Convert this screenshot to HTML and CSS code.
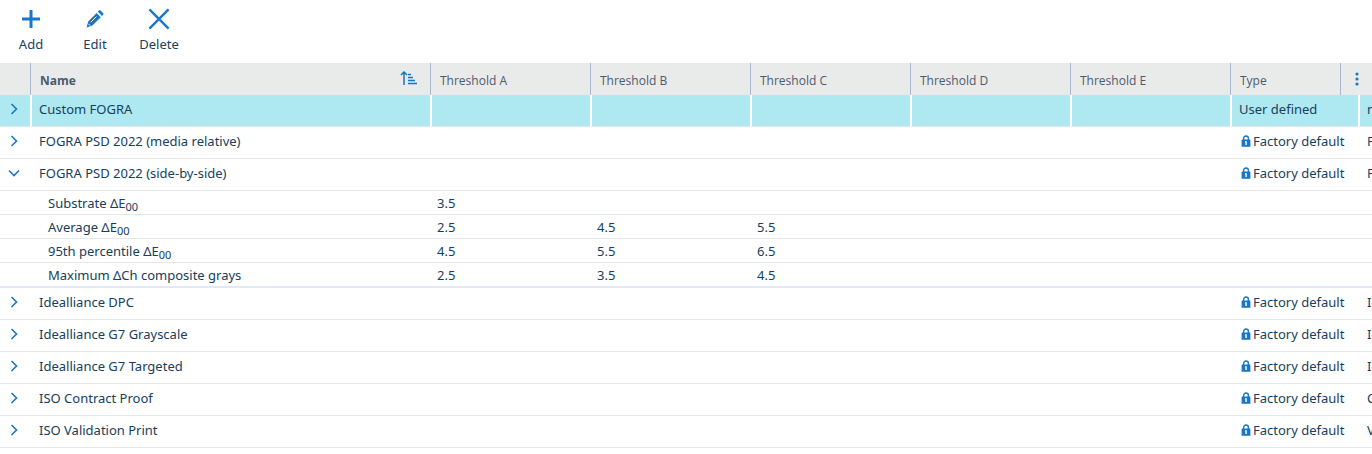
FILE: index.html
```html
<!DOCTYPE html>
<html lang="en">

<head>
    <meta charset="UTF-8">
    <meta name="viewport" content="width=device-width, initial-scale=1.0">
    <title>Verification Presets</title>
    <link rel="stylesheet" href="styles.css">
</head>

<body>
    <!-- icons used more than once -->
    <svg class="sprite" aria-hidden="true">
        <symbol id="chevron" viewBox="0 0 14 14">
            <path d="M4.5 2 L9.5 7 L4.5 12" fill="none" stroke="#1976c8" stroke-width="1.6" />
        </symbol>
        <symbol id="lock" viewBox="0 0 10 12">
            <path d="M2.6 6 V3.4 A2.4 2.4 0 0 1 7.4 3.4 V6" fill="none" stroke="#1976c8" stroke-width="1.4" />
            <rect x="0.6" y="4.4" width="8.8" height="7.4" rx="0.5" fill="#1976c8" />
            <path d="M4 6.2 H5.8 V10 H4.4 V7.4 H4 Z" fill="#fff" />
        </symbol>
    </svg>

    <div class="toolbar">
        <button type="button" class="tool">
            <svg width="22" height="22" viewBox="0 0 22 22"><path d="M11 2 V20 M2 11 H20" fill="none" stroke="#1976c8" stroke-width="3" /></svg>
            <span>Add</span>
        </button>
        <button type="button" class="tool">
            <svg width="22" height="22" viewBox="0 0 22 22">
                <path d="M2.6 19.4 L4.2 13.4 L12.6 5 L16.8 9.2 L8.4 17.6 Z M13.8 3.8 L15 2.6 Q15.8 2 16.6 2.6 L19.2 5.2 Q19.8 6 19.2 6.8 L18 8 Z" fill="#1976c8" />
                <path d="M6.8 14.2 L12.4 8.6 M4.4 15.8 L6.2 17.6" stroke="#fff" stroke-width="1" />
            </svg>
            <span>Edit</span>
        </button>
        <button type="button" class="tool">
            <svg width="22" height="22" viewBox="0 0 22 22"><path d="M1.4 1.4 L20.6 20.6 M20.6 1.4 L1.4 20.6" fill="none" stroke="#1976c8" stroke-width="2.4" /></svg>
            <span>Delete</span>
        </button>
    </div>

    <div class="grid">
        <table>
            <colgroup>
                <col class="col-toggle">
                <col class="col-name">
                <col class="col-value" span="5">
                <col class="col-type">
                <col>
            </colgroup>
            <thead>
                <tr>
                    <th></th>
                    <th class="sorted">
                        <div class="head">Name
                            <svg width="18" height="16" viewBox="0 0 18 16"><path d="M4 14 V1 M1 4 L4 1 L7 4 M8 3.5 H11 M8 6.5 H13 M8 9.5 H15 M8 12.5 H17" fill="none" stroke="#1976c8" stroke-width="1.5" /></svg>
                        </div>
                    </th>
                    <th>Threshold A</th>
                    <th>Threshold B</th>
                    <th>Threshold C</th>
                    <th>Threshold D</th>
                    <th>Threshold E</th>
                    <th>Type</th>
                    <th></th>
                </tr>
            </thead>
            <tbody>
                <tr class="selected">
                    <td><button type="button" class="toggle" aria-label="Expand"><svg><use href="#chevron" /></svg></button></td>
                    <td>Custom FOGRA</td>
                    <td></td><td></td><td></td><td></td><td></td>
                    <td>User defined</td>
                    <td>n</td>
                </tr>
                <tr>
                    <td><button type="button" class="toggle" aria-label="Expand"><svg><use href="#chevron" /></svg></button></td>
                    <td>FOGRA PSD 2022 (media relative)</td>
                    <td></td><td></td><td></td><td></td><td></td>
                    <td><svg class="lock"><use href="#lock" /></svg>Factory default</td>
                    <td>F</td>
                </tr>
                <tr>
                    <td><button type="button" class="toggle open" aria-label="Collapse"><svg><use href="#chevron" /></svg></button></td>
                    <td>FOGRA PSD 2022 (side-by-side)</td>
                    <td></td><td></td><td></td><td></td><td></td>
                    <td><svg class="lock"><use href="#lock" /></svg>Factory default</td>
                    <td>F</td>
                </tr>

                <!-- metrics of the open preset -->
                <tr class="metric">
                    <td></td>
                    <td>Substrate ΔE<sub>00</sub></td>
                    <td>3.5</td><td></td><td></td><td></td><td></td><td></td><td></td>
                </tr>
                <tr class="metric">
                    <td></td>
                    <td>Average ΔE<sub>00</sub></td>
                    <td>2.5</td><td>4.5</td><td>5.5</td><td></td><td></td><td></td><td></td>
                </tr>
                <tr class="metric">
                    <td></td>
                    <td>95th percentile ΔE<sub>00</sub></td>
                    <td>4.5</td><td>5.5</td><td>6.5</td><td></td><td></td><td></td><td></td>
                </tr>
                <tr class="metric last">
                    <td></td>
                    <td>Maximum ΔCh composite grays</td>
                    <td>2.5</td><td>3.5</td><td>4.5</td><td></td><td></td><td></td><td></td>
                </tr>

                <tr>
                    <td><button type="button" class="toggle" aria-label="Expand"><svg><use href="#chevron" /></svg></button></td>
                    <td>Idealliance DPC</td>
                    <td></td><td></td><td></td><td></td><td></td>
                    <td><svg class="lock"><use href="#lock" /></svg>Factory default</td>
                    <td>Id</td>
                </tr>
                <tr>
                    <td><button type="button" class="toggle" aria-label="Expand"><svg><use href="#chevron" /></svg></button></td>
                    <td>Idealliance G7 Grayscale</td>
                    <td></td><td></td><td></td><td></td><td></td>
                    <td><svg class="lock"><use href="#lock" /></svg>Factory default</td>
                    <td>Id</td>
                </tr>
                <tr>
                    <td><button type="button" class="toggle" aria-label="Expand"><svg><use href="#chevron" /></svg></button></td>
                    <td>Idealliance G7 Targeted</td>
                    <td></td><td></td><td></td><td></td><td></td>
                    <td><svg class="lock"><use href="#lock" /></svg>Factory default</td>
                    <td>Id</td>
                </tr>
                <tr>
                    <td><button type="button" class="toggle" aria-label="Expand"><svg><use href="#chevron" /></svg></button></td>
                    <td>ISO Contract Proof</td>
                    <td></td><td></td><td></td><td></td><td></td>
                    <td><svg class="lock"><use href="#lock" /></svg>Factory default</td>
                    <td>C</td>
                </tr>
                <tr>
                    <td><button type="button" class="toggle" aria-label="Expand"><svg><use href="#chevron" /></svg></button></td>
                    <td>ISO Validation Print</td>
                    <td></td><td></td><td></td><td></td><td></td>
                    <td><svg class="lock"><use href="#lock" /></svg>Factory default</td>
                    <td>V</td>
                </tr>
            </tbody>
        </table>

        <!-- column menu, stays over the right end of the header -->
        <button type="button" class="menu" aria-label="Columns">
            <svg width="4" height="14" viewBox="0 0 4 14" fill="#1976c8"><circle cx="2" cy="2" r="1.6" /><circle cx="2" cy="7" r="1.6" /><circle cx="2" cy="12" r="1.6" /></svg>
        </button>
    </div>
</body>

</html>
```
FILE: styles.css
```css
* {
    box-sizing: border-box;
}

body {
    margin: 0;
    background: #fff;
    color: #16405b;
    font-family: "Noto Sans", "Open Sans", sans-serif;
    font-size: 13px;
    line-height: 20px;
}

button {
    padding: 0;
    border: none;
    background: transparent;
    color: inherit;
    font: inherit;
    cursor: pointer;
}

.sprite {
    display: none;
}

.toolbar {
    display: flex;
    gap: 2px;
    height: 63px;
}

.tool {
    display: flex;
    flex-direction: column;
    align-items: center;
    gap: 4px;
    width: 62px;
    padding-top: 8px;
}

.grid {
    position: relative;
    overflow: hidden;
}

table {
    width: 100%;
    table-layout: fixed;
    border-collapse: separate;
    border-spacing: 0;
}

.col-toggle {
    width: 30px;
}

.col-name {
    width: 400px;
}

.col-value {
    width: 160px;
}

.col-type {
    width: 128px;
}

th {
    height: 32px;
    padding: 4px 0 0 9px;
    background: #e9eaea;
    border-left: 1px solid #a9b8cc;
    color: #4a5b70;
    font-family: "Open Sans", sans-serif;
    font-size: 12px;
    font-weight: 400;
    text-align: left;
}

.sorted {
    font-weight: 700;
}

.head {
    display: flex;
    justify-content: space-between;
    padding-right: 12px;
}

td {
    height: 32px;
    padding: 0 0 4px 9px;
    border-bottom: 1px solid #e2e8ec;
    white-space: nowrap;
    overflow: hidden;
}

th:first-child,
td:first-child {
    padding-left: 0;
    border-left: none;
}

.selected td {
    background: #aee8f0;
}

/* white gaps between the highlighted cells */
.selected td + td {
    padding-left: 7px;
    border-left: 2px solid #fff;
}

.metric td {
    height: 24px;
    padding: 0 0 0 7px;
}

.metric td:nth-child(2) {
    padding-left: 18px;
}

.metric.last td {
    height: 25px;
    border-bottom: 2px solid #e4e8f2;
}

sub {
    font-size: 11px;
    line-height: 0;
    vertical-align: -3px;
}

.toggle {
    display: block;
    width: 28px;
    height: 14px;
}

.toggle svg {
    display: block;
    width: 14px;
    height: 14px;
    margin: 0 auto;
}

.toggle.open svg {
    transform: rotate(90deg);
}

.lock {
    width: 10px;
    height: 12px;
    margin: 0 2px;
    vertical-align: -1px;
}

.menu {
    position: absolute;
    top: 0;
    right: 0;
    width: 32px;
    height: 32px;
    background: #e9eaea;
    border-left: 1px solid #a9b8cc;
}

.menu svg {
    display: block;
    margin: 0 auto;
}
```
